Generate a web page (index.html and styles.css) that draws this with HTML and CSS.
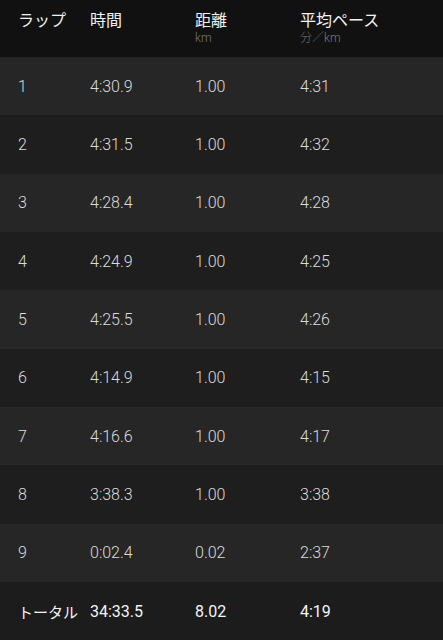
FILE: index.html
```html
<!DOCTYPE html>
<html lang="ja">
<head>
<meta charset="utf-8">
<link rel="stylesheet" href="styles.css">
</head>
<body>
<div class="laps">
  <div class="row head">
    <div class="cell"><div class="title">ラップ</div></div>
    <div class="cell"><div class="title">時間</div></div>
    <div class="cell"><div class="title">距離</div><div class="unit">km</div></div>
    <div class="cell"><div class="title">平均ペース</div><div class="unit">分／km</div></div>
  </div>
  <div class="row odd"><div class="cell">1</div><div class="cell">4:30.9</div><div class="cell">1.00</div><div class="cell">4:31</div></div>
  <div class="row even"><div class="cell">2</div><div class="cell">4:31.5</div><div class="cell">1.00</div><div class="cell">4:32</div></div>
  <div class="row odd"><div class="cell">3</div><div class="cell">4:28.4</div><div class="cell">1.00</div><div class="cell">4:28</div></div>
  <div class="row even"><div class="cell">4</div><div class="cell">4:24.9</div><div class="cell">1.00</div><div class="cell">4:25</div></div>
  <div class="row odd"><div class="cell">5</div><div class="cell">4:25.5</div><div class="cell">1.00</div><div class="cell">4:26</div></div>
  <div class="row even"><div class="cell">6</div><div class="cell">4:14.9</div><div class="cell">1.00</div><div class="cell">4:15</div></div>
  <div class="row odd"><div class="cell">7</div><div class="cell">4:16.6</div><div class="cell">1.00</div><div class="cell">4:17</div></div>
  <div class="row even"><div class="cell">8</div><div class="cell">3:38.3</div><div class="cell">1.00</div><div class="cell">3:38</div></div>
  <div class="row odd"><div class="cell">9</div><div class="cell">0:02.4</div><div class="cell">0.02</div><div class="cell">2:37</div></div>
  <div class="row total"><div class="cell">トータル</div><div class="cell">34:33.5</div><div class="cell">8.02</div><div class="cell">4:19</div></div>
</div>
</body>
</html>
```

FILE: styles.css
```css
html, body {
  margin: 0;
  padding: 0;
  background: #1e1e1e;
}
body {
  font-family: Roboto, "Noto Sans CJK JP", sans-serif;
  width: 443px;
  height: 640px;
  overflow: hidden;
}
.laps {
  display: flex;
  flex-direction: column;
}
.row {
  display: grid;
  grid-template-columns: 72px 105px 105px 1fr;
  padding-left: 18px;
  height: 58.33px;
  align-items: center;
  font-size: 16px;
  font-weight: 300;
  color: #dcdcdc;
}
.row.head {
  height: 57px;
  background: #111111;
  align-items: start;
  padding-top: 9px;
  box-sizing: border-box;
}
.title {
  font-family: "Noto Sans CJK JP", sans-serif;
  font-size: 16px;
  line-height: 20px;
  font-weight: 400;
  color: #f2f2f2;
}
.unit {
  font-family: Roboto, "Noto Sans CJK JP", sans-serif;
  font-size: 12px;
  line-height: 16px;
  color: #7a7a7a;
  font-weight: 300;
  margin-top: 1px;
}
.odd { background: #262626; }
.even { background: #1e1e1e; }
.total {
  background: #1c1c1c;
  font-weight: 400;
  color: #f4f4f4;
}
.total .cell:first-child {
  font-family: "Noto Sans CJK JP", sans-serif;
  font-size: 15px;
}
```
